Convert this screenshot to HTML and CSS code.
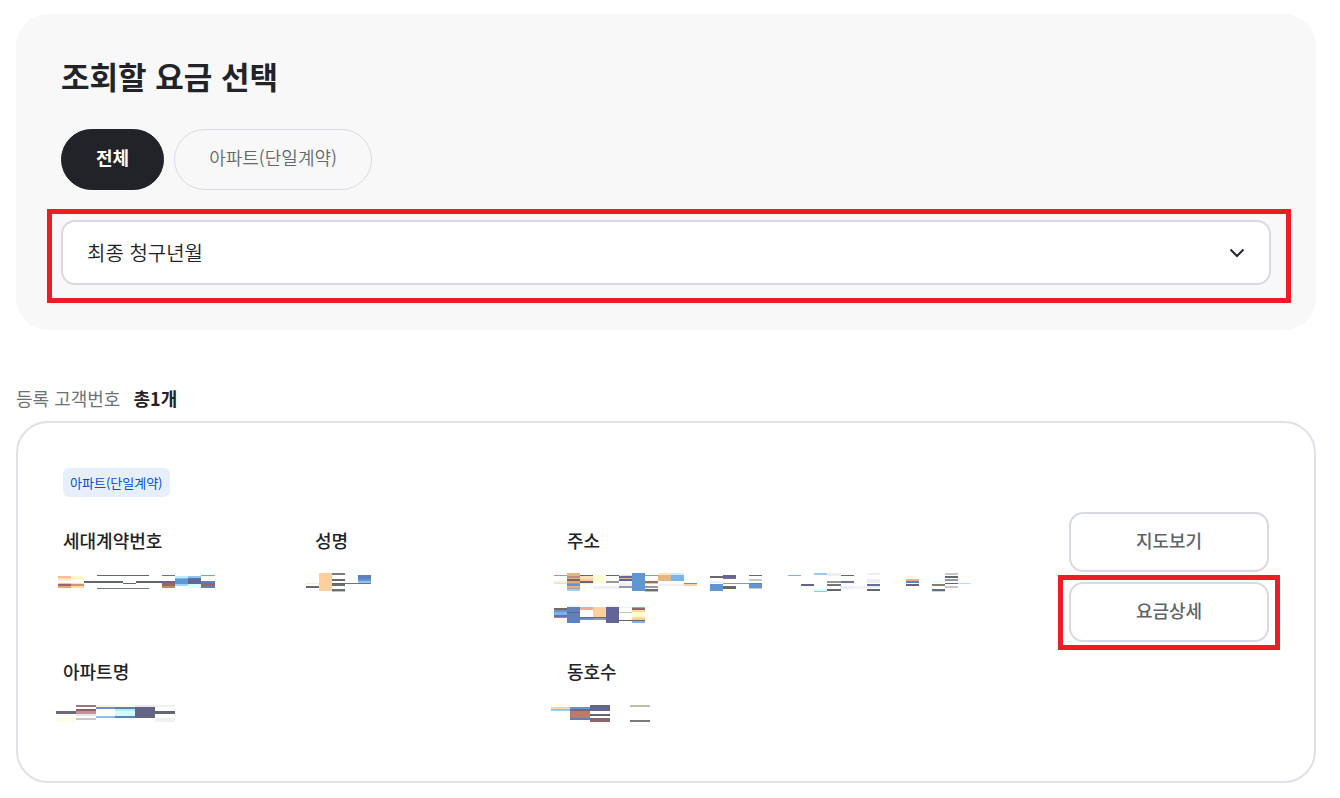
FILE: index.html
```html
<!DOCTYPE html>
<html lang="ko">
<head>
    <meta charset="utf-8">
    <meta name="viewport" content="width=device-width, initial-scale=1">
    <title>요금 조회</title>
    <link rel="stylesheet" href="styles.css">
</head>
<body>
    <section class="filter">
        <h1 id="filterTitle">조회할 요금 선택</h1>
        <div class="pills">
            <button type="button" class="pill active">전체</button>
            <button type="button" class="pill">아파트(단일계약)</button>
        </div>
        <div class="select-wrap">
            <select id="month" aria-labelledby="filterTitle">
                <option>최종 청구년월</option>
            </select>
            <svg class="chevron" width="16" height="10" viewBox="0 0 16 10" aria-hidden="true">
                <path d="M1.5 1.5 L8 8 L14.5 1.5" fill="none" stroke="#25262c" stroke-width="2"/>
            </svg>
            <span class="mark mark-select"></span>
        </div>
    </section>

    <p class="count">등록 고객번호 <strong>총1개</strong></p>

    <section class="card">
        <span class="badge">아파트(단일계약)</span>
        <div class="card-body">
            <dl class="info">
                <div>
                    <dt>세대계약번호</dt>
                    <dd><svg class="mosaic" id="contract" width="240" height="60"></svg></dd>
                </div>
                <div>
                    <dt>성명</dt>
                    <dd><svg class="mosaic" id="name" width="240" height="60"></svg></dd>
                </div>
                <div>
                    <dt>주소</dt>
                    <dd><svg class="mosaic" id="address" width="424" height="60"></svg></dd>
                </div>
                <div class="wide">
                    <dt>아파트명</dt>
                    <dd><svg class="mosaic" id="apartment" width="240" height="34"></svg></dd>
                </div>
                <div>
                    <dt>동호수</dt>
                    <dd><svg class="mosaic" id="unit" width="240" height="34"></svg></dd>
                </div>
            </dl>
            <div class="actions">
                <button type="button">지도보기</button>
                <div class="marked">
                    <button type="button">요금상세</button>
                    <span class="mark mark-button"></span>
                </div>
            </div>
        </div>
    </section>

    <script src="mosaic.js"></script>
</body>
</html>
```
FILE: styles.css
```css
* {
    box-sizing: border-box;
}

body {
    margin: 0;
    padding: 14px 24px 14px 16px;
    background-color: #fff;
    color: #222328;
    font-family: "Noto Sans CJK KR", sans-serif;
    font-size: 18px;
}

button,
select {
    font-family: inherit;
    cursor: pointer;
}

.filter {
    padding: 45px;
    background-color: #f8f8f8;
    border-radius: 32px;
}

h1 {
    margin: 0 0 36px;
    font-size: 31px;
    line-height: 34px;
    font-weight: 700;
}

.pills {
    display: flex;
    gap: 10px;
    margin-bottom: 30px;
}

.pill {
    height: 61px;
    padding: 0 34px 6px;
    border: 1px solid #d7dae3;
    border-radius: 31px;
    background-color: transparent;
    color: #63686e;
    font-size: 18px;
    font-weight: 350;
}

.pill.active {
    background-color: #222328;
    border-color: #222328;
    color: #fff;
    font-weight: 700;
}

.select-wrap {
    position: relative;
}

select {
    display: block;
    width: 100%;
    height: 65px;
    padding: 0 60px 0 24px;
    border: 2px solid #d7dae3;
    border-radius: 14px;
    background-color: #fff;
    color: #222328;
    font-size: 20px;
    font-weight: 350;
    appearance: none;
}

.chevron {
    position: absolute;
    right: 26px;
    top: 28px;
    pointer-events: none;
}

/* red highlight frames */
.mark {
    position: absolute;
    border: 5px solid #ee1c25;
    pointer-events: none;
}

.mark-select {
    inset: -11px -20px -18px -14px;
}

.mark-button {
    inset: -7px -11px -8px;
}

.count {
    margin: 55px 0 10px;
    line-height: 26px;
    color: #6d7278;
}

.count strong {
    margin-left: 8px;
    color: #222328;
    font-weight: 700;
}

.card {
    padding: 45px;
    border: 2px solid #dfe1e8;
    border-radius: 32px;
}

.badge {
    display: block;
    width: fit-content;
    margin-bottom: 15px;
    padding: 0 7px;
    border-radius: 6px;
    background-color: #e8effc;
    color: #0050d8;
    font-size: 13px;
    line-height: 29px;
}

.card-body {
    display: flex;
    align-items: flex-start;
}

.info {
    flex: 1;
    display: grid;
    grid-template-columns: 252px 252px 1fr;
    row-gap: 27px;
    margin: 0;
    padding-top: 15px;
}

.info > div {
    min-width: 0;
}

.info .wide {
    grid-column: span 2;
}

dt {
    margin-bottom: 18px;
    line-height: 26px;
    font-weight: 500;
}

dd {
    margin: 0 0 0 -16px;
}

.mosaic {
    display: block;
    shape-rendering: crispEdges;
}

.actions {
    display: flex;
    flex-direction: column;
    gap: 10px;
    width: 200px;
}

.actions button {
    display: block;
    width: 100%;
    height: 60px;
    padding: 0 0 4px;
    border: 2px solid #d7dae3;
    border-radius: 14px;
    background-color: #fff;
    color: #5f6368;
    font-size: 18px;
    font-weight: 500;
}

.marked {
    position: relative;
}
```
FILE: mosaic.js
```js
// Masked personal data: each column is "x width", then its blocks as "y height colour".
const masks = {
    contract: [
        "11 13|5 2 #f4bd98|7 1 #ffdcb0|8 2 #fdeecb|12 1 #f0c490|13 2 #9e6466|15 2 #e0a878",
        "24 13|5 2 #fffcc4|7 1 #ffeeb8|12 1 #ffe4ae|13 2 #d09868|15 2 #ffd9a5",
        "37 39|10 2 #63686e",
        "50 52|4 1 #63686e|17 1 #74777a",
        "76 13|12 1 #63686e",
        "89 26|10 2 #63686e",
        "115 13|4 1 #5f74a6|10 2 #6a6590|12 3 #9a6466|15 2 #bb8d60",
        "128 13|5 2 #b9eeff|7 1 #7fbdf0|8 5 #6196d2|13 2 #9dd6fa",
        "141 13|5 2 #8cc4f2|7 1 #5f74b8|8 5 #646597|13 4 #d8fdff",
        "154 14|4 1 #7aa0d0|10 2 #5c80bf|12 3 #906868|15 2 #5c80bf"
    ],
    name: [
        "7 13|4 1 #fffee4|12 1 #ffeccc|15 2 #676c72",
        "20 13|2 18 #ffd09e",
        "33 13|2 2 #817a7c|8 2 #6d686a|12 1 #5e6272|13 2 #706b6c|18 2 #68727a|20 1 #c0c4b8",
        "46 26|12 1 #707478",
        "59 13|4 4 #6080bb|8 2 #6196d2|10 2 #88c8f8"
    ],
    address: [
        "3 13|4 1 #b09498|10 2 #fdeed0|12 1 #c4e8f6",
        "16 13|2 3 #e6b582|5 2 #b88f7c|7 1 #e6b582|8 2 #7a6260|10 2 #e0a878|12 1 #c09070|13 2 #6a92cf|15 2 #f0ac78|17 1 #98a0a0|18 2 #a0cfee",
        "29 13|4 1 #63686e|5 3 #fde0b8|8 2 #ffc890|10 2 #7a6260|12 1 #d4f4ff",
        "42 13|4 8 #ffffd4|15 3 #f0f0f2",
        "55 13|4 1 #63657f|10 2 #949a9f|15 3 #f0f0f2",
        "68 13|4 1 #ffd9a8|5 2 #6666a0|7 1 #f0b080|8 2 #646597|12 3 #f0f0f2|15 2 #949a9f",
        "81 13|2 18 #6196d2",
        "94 13|4 1 #949a9f|10 2 #a06c60|12 1 #d8cbb8|15 2 #949a9f|18 2 #63727a|20 1 #c4c4a4",
        "107 13|2 2 #fde4c8|4 6 #e6b582|13 2 #f0f0f2",
        "120 13|2 2 #cdeaff|4 6 #7ab5e8|13 2 #f0f0f2",
        "133 13|12 1 #6a92cf|13 2 #f5d4a8",
        "159 13|5 2 #63686e|10 2 #f0f0f2|13 7 #6196d2",
        "172 13|4 1 #7a6270|5 2 #646597|7 1 #8b6a70|12 1 #949a9f|15 3 #63686e|18 2 #fffde0",
        "185 13|12 1 #949a9f",
        "198 13|4 1 #676a70|8 2 #c8c8cc|12 1 #5f80b0|13 4 #6196d2|17 1 #c8c8cc",
        "237 13|4 1 #7ab5e8",
        "250 13|13 2 #63658a",
        "263 13|2 2 #98c8f4|18 2 #d4ffff|20 1 #90c8f4",
        "276 14|2 3 #eeeeee|10 2 #949a9f|13 2 #74777a|18 2 #63686e",
        "290 13|4 1 #63686e|10 2 #5f78a8|15 3 #eeeeee",
        "303 13|15 3 #f0f3f8",
        "316 13|2 2 #eeeeee|8 4 #eeeeee|13 2 #647090|15 2 #eeeeee|18 2 #63686e",
        "342 13|10 2 #fffde0",
        "355 13|8 2 #e6b582|10 2 #6080bb|13 2 #63657a",
        "381 13|10 2 #e4ffff|13 2 #8b7c6c|18 2 #63727a|20 1 #c4d8e8",
        "394 13|2 2 #c8c8cc|5 2 #63686e|8 2 #949a9f|12 1 #636870|15 2 #c8c8cc",
        "407 13|12 1 #b0e4fb",
        // second line
        "3 13|37 2 #7a6668|39 2 #6196d2|41 3 #7ab5e8|44 2 #5f74b0|46 1 #c08068",
        "16 13|34 2 #f4f4f8|36 16 #6080bb|41 1 #646597",
        "29 13|36 1 #90c8f4|37 2 #e6b090|46 1 #63686e|47 2 #6a92cf",
        "42 13|36 1 #f8d4b0|37 9 #ffd09e|46 1 #63686e|47 2 #949a9f",
        "55 13|34 2 #f4f4f8|36 16 #646597",
        "68 13|36 1 #f0f0f2|41 1 #c8c0c8|49 1 #636070",
        "81 13|36 1 #7ab5e8|37 2 #906868|39 2 #fdd4a0|41 5 #ffffcc|46 1 #fde0b8|47 2 #ffd09e|49 1 #7a6260|50 2 #7ab5e8"
    ],
    apartment: [
        "9 20|9 3 #676c7c|16 4 #fffde4",
        "29 20|3 2 #a07880|7 2 #8b6468|9 3 #c0949a|12 2 #e8e8ec|16 2 #c8c8cc",
        "49 19|3 2 #fff0e0|5 2 #6a92cf|14 2 #88c0f2",
        "68 20|3 2 #fffbe0|5 2 #6080a0|7 2 #b4ecff|9 5 #d0ffff|14 2 #6080bb",
        "88 20|3 2 #e8e8f0|5 11 #646585",
        "108 20|3 2 #f0f0f0|9 3 #63686e|16 4 #f0f0f0"
    ],
    unit: [
        "0 19|5 2 #f0d4b0|7 2 #98c8ec",
        "19 20|5 2 #6196d2|7 2 #7a6478|9 7 #b87c6c|16 2 #6080bb",
        "39 20|3 2 #63686e|5 4 #646597|12 2 #63686e|16 4 #8b666c|20 1 #fffde8",
        "79 20|3 2 #c4b8a8|18 2 #7f7a78"
    ]
};

for (const id in masks) {
    let rects = "";
    for (const column of masks[id]) {
        const [pos, ...blocks] = column.split("|");
        const [x, w] = pos.split(" ");
        for (const block of blocks) {
            const [y, h, color] = block.split(" ");
            rects += `<rect x="${x}" y="${y}" width="${w}" height="${h}" fill="${color}"/>`;
        }
    }
    document.getElementById(id).innerHTML = rects;
}
```
